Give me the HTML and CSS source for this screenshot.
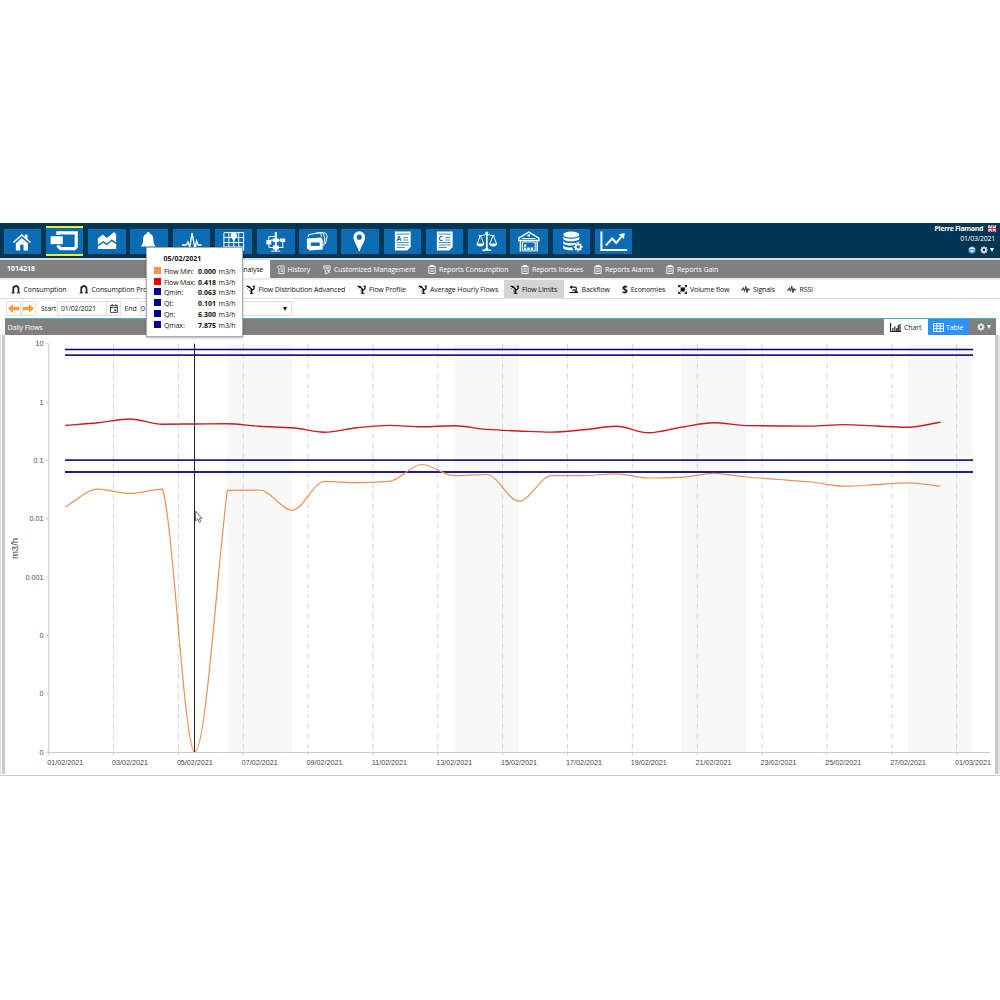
FILE: index.html
```
<!DOCTYPE html>
<html lang="en">
<head>
    <meta charset="UTF-8">
    <meta name="viewport" content="width=device-width, initial-scale=1.0">
    <title>Flow Limits</title>
    <link rel="stylesheet" href="styles.css">
</head>

<body>

    <!-- shared symbols -->
    <svg class="defs">
      <symbol id="ic-clip" viewBox="0 0 9 10"><path d="M1 1.5h7v8h-7z" fill="none" stroke="currentColor"/><path d="M3 0h3v2H3zM2.5 4h4M2.5 5.7h4M2.5 7.4h4" fill="currentColor" stroke="currentColor" stroke-width=".8"/></symbol>
      <symbol id="ic-hist" viewBox="0 0 9 10"><path d="M4.500 1H8v8.500H2V5" fill="none" stroke="currentColor" stroke-width=".9"/><circle cx="2.600" cy="2.600" r="1.900" fill="none" stroke="currentColor" stroke-width=".8"/><path d="M4 5.500h3M4 7.200h3M5.500 3.500h1.500" stroke="currentColor" stroke-width=".8"/></symbol>
      <symbol id="ic-cust" viewBox="0 0 9 10"><path d="M1 .8h7v4l-3 4.700H2.500V6L1 4z" fill="none" stroke="currentColor" stroke-width=".9"/><path d="M2 2.500h5M2.500 4.200h4M6 6l2 3M4 6.500l3-1" stroke="currentColor" stroke-width=".9"/></symbol>
      <symbol id="ic-pipe" viewBox="0 0 9 9"><path d="M2 8V4.200C2 2 3.300 1.200 4.800 1.200S7.300 2.200 7.300 4V8" fill="none" stroke="#222" stroke-width="1.700"/><path d="M.4 7.900h3.200M5.600 7.900h3M1.200 2.200h2M4.800 0v2" stroke="#222" stroke-width="1"/></symbol>
      <symbol id="ic-tap" viewBox="0 0 10 10"><path d="M.3 1.200l3 .8 2.700 2.800v4.700M6 6L8.600 4.200V.8" fill="none" stroke="#111" stroke-width="1.400"/><path d="M1.500 3.800l2.600-2.600M7 1.400h3M3.600 5.800l2.200-.6M3.800 7.600h2M4 9.300h4" stroke="#111" stroke-width="1"/></symbol>
      <symbol id="ic-back" viewBox="0 0 10 9"><path d="M2 2h4c2.500 0 2.500 3.200 0 3.200H3.500M.5 7.600h9" fill="none" stroke="#111" stroke-width="1.200"/><path d="M3 0v4L.5 2zM7.500 4.800l2 2.800H5.500z" fill="#111"/></symbol>
      <symbol id="ic-vol" viewBox="0 0 9 9"><circle cx="4.500" cy="4.500" r="2.300" fill="#111"/><path d="M.2 0h2.200L1 1zM0 0h2.500v1H1v1.500H0zM6.500 0H9v2.500H8V1H6.500zM9 6.500V9H6.500V8H8V6.500zM2.500 9H0V6.500h1V8h1.500z" fill="#111"/><path d="M.8.800l1.700 1.700M8.200.800L6.500 2.500M.8 8.200l1.700-1.700M8.200 8.200L6.500 6.500" stroke="#111"/></symbol>
      <symbol id="ic-sig" viewBox="0 0 10 8"><path d="M0 4.500h1.400L2.500 2l1.200 4L5 .6l1.300 6.600 1-4.400 .9 1.700H10" fill="none" stroke="#222" stroke-width="1"/></symbol>
      <symbol id="ic-gear" viewBox="0 0 10 10"><circle cx="5" cy="5" r="2.600" fill="none" stroke="#fff" stroke-width="1.700"/><path d="M5 .4v1.800M5 7.800v1.800M.4 5h1.800M7.800 5h1.800M1.800 1.800L3 3M7 7l1.200 1.200M8.200 1.800L7 3M1.800 8.200L3 7" stroke="#fff" stroke-width="1.500"/></symbol>
    </svg>

    <div class="window">
      <header class="topbar">
        <nav class="tiles">
          <a class="tile"><svg viewBox="0 0 38 25"><path d="M9 13L18 5l3.200 2.800V5.500h2.600V10l3.500 3-1 1.100L18 6.900 10 14.100zM12 14.200l6-5.300 6.200 5.300V21.500h-4.400v-5.600h-3.400v5.600H12z"/></svg></a>
          <a class="tile active"><svg viewBox="0 0 38 25"><path d="M4.700 8.200h12.300v8H4.700z"/><path d="M12 7V4.800H30.600V19L29 20.700H14.800L12.500 18.400V17.300" class="ln3"/></svg></a>
          <a class="tile"><svg viewBox="0 0 38 25"><path d="M10 9.500l5-4 4 3.500 7.500-6 2 2.500v7.800l-4.500-2.800-5 4-3.500-2.500L10 15.800z"/><path d="M10 17.600l5.500-3.800 3.500 2.500 5-4 4.500 2.800V20H10z"/></svg></a>
          <a class="tile"><svg viewBox="0 0 38 25"><path d="M18.500 3c1 0 1.600.7 1.600 1.600 3 .9 3.600 3.400 3.600 6.400 0 3.600 1 5 2.300 6.500H11c1.300-1.500 2.300-2.900 2.300-6.500 0-3 .6-5.500 3.600-6.400 0-.9.6-1.600 1.600-1.600zM16.500 18.500h4l-2 2z"/></svg></a>
          <a class="tile"><svg viewBox="0 0 38 25"><path d="M9 16h4.500l1.500-3 2 5 2.300-14 3 16 1.600-8 1.600 4H29" class="ln1h"/></svg></a>
          <a class="tile"><svg viewBox="0 0 38 25"><path d="M9 3.500h20v18H9zM14 3.500v18M19 10v12M24 3.500v18M9 8.500h20M9 13.500h20M9 18h20" class="ln1"/><circle cx="19" cy="6.500" r="3.200"/><path d="M16.500 8h5L19 13z"/></svg></a>
          <a class="tile"><svg viewBox="0 0 38 25"><path d="M19 3v19M14.500 22.300h9M12 13V7.500h7M12 15.500v3h15M26 12v6" class="ln1"/><path d="M18 3h2v19h-2zM9.500 11h5v4.500h-5zM16 9.500h6v3.500h-6zM23.500 9.500h5V13h-5zM16 16.500h6v4h-6zM14 10.500h12v1.200H14z"/></svg></a>
          <a class="tile"><svg viewBox="0 0 38 25"><path d="M8 9.500l14.500-1 1.500 2.300V20.500l-13 1-3-2z"/><path d="M9 8l1-2.500 12-2 .8 4M17 4l7.500-.5 1.500 6-1 7.500M22 3.500l5 .5 1.500 3-1.800 8" class="ln1"/><path d="M12 13.500h9V17h-9z" class="cut"/></svg></a>
          <a class="tile"><svg viewBox="0 0 38 25"><path d="M18.500 2.200a5.900 5.900 0 0 1 5.900 5.900c0 4.500-3.700 8-5.400 14.200h-1c-1.700-6.200-5.400-9.700-5.400-14.200a5.900 5.900 0 0 1 5.900-5.900zm0 3.300a2.600 2.600 0 1 0 0 5.200 2.600 2.600 0 0 0 0-5.200z" fill-rule="evenodd"/></svg></a>
          <a class="tile"><svg viewBox="0 0 38 25"><path d="M11 2.500h16v15.500l-3.500 3.500H11z"/><path d="M12.500 5h13M19.500 8.500h5M19.500 11h5M13 13.500h12M13 16h12M13 18.500h8" class="cutln"/><text x="12.600" y="11.800">A</text></svg></a>
          <a class="tile"><svg viewBox="0 0 38 25"><path d="M11 2.500h16v15.500l-3.500 3.500H11z"/><path d="M12.500 5h13M19.500 8.500h5M19.500 11h5M13 13.500h12M13 16h12M13 18.500h8" class="cutln"/><text x="12.600" y="11.800">C</text></svg></a>
          <a class="tile"><svg viewBox="0 0 38 25"><path d="M19 3v17M11 6.200c3 1.200 5-.8 8-.8s5 2 8 .8M12.500 6.200L9.300 15M12.500 6.200L16 15M25.500 6.200L22 15M25.500 6.200L29 15" class="ln1"/><path d="M8.500 14.500h8c0 4-8 4-8 0zM21.500 14.500h8c0 4-8 4-8 0zM18.200 5h1.600v15h-1.600zM17.500 19h3v1.500h3V22h-9v-1.500h3z"/><circle cx="19" cy="4" r="1.600"/></svg></a>
          <a class="tile"><svg viewBox="0 0 38 25"><path d="M8.800 9l10.200-6 10.200 6v2.500H8.800zM10.500 11v11.500M27.500 11v11.500" class="ln1h"/><path d="M12.500 9.500h13M12.500 13h13v9h-13z" class="ln1"/><path d="M14 15.500h2.500v2H14zM14 18.500h2.500V21H14zM17.500 18.500h2.500V21h-2.500zM21 18.500h2.500V21h-2.500zM17.700 5.500h2.600v2h-2.600z"/></svg></a>
          <a class="tile"><svg viewBox="0 0 38 25"><ellipse cx="18.500" cy="5.500" rx="8.200" ry="3"/><path d="M10.300 7.500c2 3 14.400 3 16.400 0V10c-2 3.200-14.400 3.200-16.400 0zM10.300 12c2 3 14.400 3 16.400 0v1.500c-3 .5-5 1.500-6 2.900-4 .3-9.400-.4-10.400-2zM10.300 16.500c2 1.800 6 2.300 9.300 2 0 1 .3 1.900.8 2.800-4 .3-9.100-.3-10.100-2z"/><circle cx="25.500" cy="18" r="2.500" class="ln15"/><path d="M25.500 13.500v2M25.500 20.500v2M21 18h2M28 18h2M22.300 14.800l1.400 1.400M27.300 19.800l1.400 1.400M28.700 14.800l-1.400 1.400M23.700 19.800l-1.400 1.400" class="ln1h"/></svg></a>
          <a class="tile"><svg viewBox="0 0 38 25"><path d="M6.500 2.500V21.200H32.500" class="ln2"/><path d="M11 16.500l6.500-7 4 4.500 6.500-8" class="ln2"/><path d="M24 5.300l6-1.300-.6 6z"/></svg></a>
        </nav>
        <div class="user">
          <div class="line name">Pierre Flamand <svg class="flag" viewBox="0 0 9 7"><path fill="#234a8c" d="M0 0h9v7H0z"/><path d="M0 0l9 7M9 0L0 7" stroke="#fff" stroke-width="1.600"/><path d="M0 0l9 7M9 0L0 7" stroke="#d8304a" stroke-width=".7"/><path d="M4.500 0v7M0 3.500h9" stroke="#fff" stroke-width="2.400"/><path d="M4.500 0v7M0 3.500h9" stroke="#d8304a" stroke-width="1.300"/></svg></div>
          <div class="line today">01/03/2021</div>
          <div class="line tools"><svg class="globe" viewBox="0 0 8 8"><circle cx="4" cy="4" r="3.600" fill="#5aa0dc"/><path d="M1.300 2.800c1.500-2 4-2 5.400 0L6 5 4 6.500 2 5z" fill="#e6f1fa"/><path d="M2 3.800h4" stroke="#2f72b5"/></svg><svg class="gear"><use href="#ic-gear"/></svg><i class="caret"></i></div>
        </div>
      </header>

      <div class="menubar">
        <div class="meter">1014218</div>
        <div class="tab selected">Analyse</div>
        <div class="tab m1"><svg><use href="#ic-hist"/></svg>History</div>
        <div class="tab m2"><svg><use href="#ic-cust"/></svg>Customized Management</div>
        <div class="tab m3"><svg><use href="#ic-clip"/></svg>Reports Consumption</div>
        <div class="tab m4"><svg><use href="#ic-clip"/></svg>Reports Indexes</div>
        <div class="tab m5"><svg><use href="#ic-clip"/></svg>Reports Alarms</div>
        <div class="tab m6"><svg><use href="#ic-clip"/></svg>Reports Gain</div>
      </div>

      <div class="submenu">
        <div class="item s1"><svg><use href="#ic-pipe"/></svg>Consumption</div>
        <div class="item s2"><svg><use href="#ic-pipe"/></svg>Consumption Pro</div>
        <div class="item s3"><svg><use href="#ic-tap"/></svg>Flow Distribution Advanced</div>
        <div class="item s4"><svg><use href="#ic-tap"/></svg>Flow Profile</div>
        <div class="item s5"><svg><use href="#ic-tap"/></svg>Average Hourly Flows</div>
        <div class="item s6 current"><svg><use href="#ic-tap"/></svg>Flow Limits</div>
        <div class="item s7"><svg><use href="#ic-back"/></svg>Backflow</div>
        <div class="item s8"><b class="dollar">$</b>Economies</div>
        <div class="item s9"><svg><use href="#ic-vol"/></svg>Volume flow</div>
        <div class="item s10"><svg><use href="#ic-sig"/></svg>Signals</div>
        <div class="item s11"><svg><use href="#ic-sig"/></svg>RSSI</div>
      </div>

      <div class="filter">
        <span class="arrow"><svg viewBox="0 0 14 12"><path d="M1 6l5.500-5v3H13v4H6.500v3z"/></svg></span>
        <span class="arrow"><svg viewBox="0 0 14 12"><path d="M13 6L7.500 1v3H1v4h6.500v3z"/></svg></span>
        <label>Start</label>
        <span class="field date">01/02/2021</span>
        <span class="field cal"><svg viewBox="0 0 9 10"><path d="M.6 1.800h7.800v7.600H.6zM.6 4h7.800M2.500 0v2.500M6.500 0v2.500" fill="none" stroke="#333"/><path d="M5 6h2v2H5z" fill="#333"/></svg></span>
        <label class="end">End</label>
        <span class="field date2">0</span>
        <span class="field select"><i class="caret"></i></span>
      </div>

      <div class="panel-title">
        <span class="title">Daily Flows</span>
        <div class="view chart-btn"><svg viewBox="0 0 11 9"><path d="M.5 0v8.500H11M2.800 8V5M4.800 8V3.500M6.800 8V5M8.300 8V2M10 8V1" fill="none" stroke="#222" stroke-width="1.200"/></svg>Chart</div>
        <div class="view table-btn"><svg viewBox="0 0 11 9"><path d="M.5.500h10v8H.500zM.5 3h10M.5 5.700h10M3.800.500v8M7.200.500v8" fill="none" stroke="#fff" stroke-width=".9"/></svg>Table</div>
        <div class="view opts"><svg class="gear"><use href="#ic-gear"/></svg><i class="caret"></i></div>
      </div>

      <div class="chart">
        <svg id="plot" viewBox="0 335 1000 439" width="1000" height="439"></svg>
      </div>

      <div class="tooltip">
        <div class="tt-title">05/02/2021</div>
        <div class="tt-row"><i class="sw orange"></i><span>Flow Min:</span><b>0.000</b> m3/h</div>
        <div class="tt-row"><i class="sw red"></i><span>Flow Max:</span><b>0.418</b> m3/h</div>
        <div class="tt-row"><i class="sw"></i><span>Qmin:</span><b>0.063</b> m3/h</div>
        <div class="tt-row"><i class="sw"></i><span>Qt:</span><b>0.101</b> m3/h</div>
        <div class="tt-row"><i class="sw"></i><span>Qn:</span><b>6.300</b> m3/h</div>
        <div class="tt-row"><i class="sw"></i><span>Qmax:</span><b>7.875</b> m3/h</div>
      </div>
    </div>

    <script>

        var X0 = 65.2, DAY = 32.42, TOP = 343.7, BOTTOM = 752.5;

        // one value per day, already as heights on the plot
        var flowMin = [507, 489.2, 493.4, 489.2, 752, 490.3, 490, 510.3, 481.4, 482.7, 481.3, 464.5, 475.7, 474.5,
                       501.2, 475.6, 475.6, 473.9, 478, 477.3, 473.3, 477, 479.5, 482, 486.2, 484.7, 482.8, 486.2];
        var flowMax = [425.5, 422.8, 419, 424.2, 424, 423.7, 426.3, 427.8, 432.2, 427.8, 425.4, 426.8, 425.7, 429.4,
                       431, 432.1, 429.8, 426.3, 432.8, 427.3, 422.7, 425.6, 426, 426.1, 424.6, 426, 427.2, 422.3];

        var out = "";

        function line(x1, y1, x2, y2, cls) {
            out += '<line x1="' + x1 + '" y1="' + y1 + '" x2="' + x2 + '" y2="' + y2 + '" class="' + cls + '"/>';
        }

        function label(x, y, txt, cls) {
            out += '<text x="' + x + '" y="' + y + '" class="' + cls + '">' + txt + '</text>';
        }

        // monotone spline
        function curve(v, cls) {
            var d = [], m = [], i;
            for (i = 0; i < v.length - 1; i++) d[i] = v[i + 1] - v[i];
            m[0] = d[0];
            m[v.length - 1] = d[v.length - 2];
            for (i = 1; i < v.length - 1; i++) {
                m[i] = d[i - 1] * d[i] <= 0 ? 0 : 2 * d[i - 1] * d[i] / (d[i - 1] + d[i]);
            }
            var p = "M" + X0 + " " + v[0];
            for (i = 0; i < v.length - 1; i++) {
                var x = X0 + i * DAY, a = m[i], b = m[i + 1];
                // sharp corners on both sides of a drop to zero
                if (d[i] > 100) a = d[i] * 0.35;
                if (d[i] < -100) b = d[i];
                p += "C" + (x + DAY / 3) + " " + (v[i] + a / 3) + " " + (x + DAY * 2 / 3) + " " + (v[i + 1] - b / 3) + " " + (x + DAY) + " " + v[i + 1];
            }
            out += '<path d="' + p + '" class="' + cls + '"/>';
        }

        // weekends
        [5, 12, 19, 26].forEach(function (n) {
            out += '<rect x="' + (X0 + n * DAY) + '" y="' + TOP + '" width="' + 2 * DAY + '" height="408" class="weekend"/>';
        });

        for (var i = 0; i < 14; i++) {
            line(113.5 + i * 64.86, TOP, 113.5 + i * 64.86, BOTTOM, "grid");
            line(113.5 + i * 64.86, BOTTOM, 113.5 + i * 64.86, 755, "axis");
        }

        line(48.800, TOP, 48.800, 755, "axis");
        line(48.5, BOTTOM, 990, BOTTOM, "axis");

        ["10", "1", "0.1", "0.01", "0.001", "0", "0", "0"].forEach(function (t, n) {
            var y = TOP + n * 58.36;
            line(46, y, 48.5, y, "axis");
            label(43.5, y + 2.5, t, "ylab");
        });

        for (i = 0; i < 15; i++) {
            var day = 1 + i * 2;
            var txt = day > 28 ? "01/03/2021" : (day < 10 ? "0" + day : day) + "/02/2021";
            label(65.2 + i * 64.84, 764.6, txt, "xlab");
        }
        out += '<text transform="translate(17.5 548.5) rotate(-90)" class="unit">m3/h</text>';

        line(65, 349.5, 973, 349.5, "limit thin");
        line(65, 355.2, 973, 355.2, "limit");
        line(65, 460.2, 973, 460.2, "limit");
        line(65, 472, 973, 472, "limit");
        curve(flowMin, "fmin");
        curve(flowMax, "fmax");
        line(194.5, TOP, 194.5, 752, "cursor-line");

        out += '<path d="M195.500 511v10l2.300-2 1.500 3.300 1.500-.7-1.500-3.200h2.700z" class="pointer"/>';

        document.getElementById("plot").innerHTML = out;

    </script>

</body>
</html>
```
FILE: styles.css
```
* {
    box-sizing: border-box;
}

body {
    margin: 0;
    padding-top: 223px;
    background-color: #fff;
    font-family: "Open Sans", "Noto Sans", sans-serif;
    font-size: 7px;
    letter-spacing: -.1px;
    color: #222;
    white-space: nowrap;
}

.defs {
    display: none;
}

.window {
    position: relative;
    width: 1000px;
    height: 553px;
    border-bottom: 1px solid #ccc;
}

/* top bar */
.topbar {
    display: flex;
    justify-content: space-between;
    height: 35px;
    padding-left: 3.6px;
    background-color: #003553;
}

.tiles {
    display: flex;
    gap: 4.7px;
    padding-top: 6px;
}

.tile {
    width: 37.55px;
    height: 25px;
    background-color: #0b6bb3;
}

.tile.active {
    height: 29.500px;
    margin-top: -3px;
    border-top: 2.500px solid #f8ee1c;
    border-bottom: 2.500px solid #f8ee1c;
}

.tile svg {
    display: block;
    width: 100%;
    height: 25px;
    fill: #fff;
}

.tile text {
    font-size: 7px;
    font-weight: bold;
    fill: #0b6bb3;
}

.ln1, .ln1h, .ln15, .ln2, .ln3 {
    fill: none;
    stroke: #fff;
}
.ln1 { stroke-width: 1; }
.ln1h { stroke-width: 1.4; }
.ln15 { stroke-width: 1.7; }
.ln2 { stroke-width: 2; }
.ln3 { stroke-width: 3.2; }

.tile .cut { fill: #0b6bb3; }

.cutln {
    stroke: #0b6bb3;
    stroke-width: .8;
}

.user {
    color: #fff;
    padding-right: 4px;
}

.user .line {
    display: flex;
    justify-content: flex-end;
    align-items: center;
    height: 11.6px;
}

.user .name {
    height: 10px;
    font-weight: bold;
    letter-spacing: -.35px;
}

.user .today {
    padding-right: 1px;
    letter-spacing: -.25px;
}

.user .tools {
    padding-right: 2px;
}

.flag {
    width: 8.5px;
    height: 7px;
    margin-left: 4.5px;
}

.globe {
    width: 8px;
    height: 8px;
    margin-right: 4px;
}

.gear {
    width: 8px;
    height: 8px;
    margin-right: 2px;
}

.caret {
    border: 2.5px solid transparent;
    border-top: 4px solid #fff;
    border-bottom: 0;
}

/* grey menu */
.menubar {
    display: flex;
    height: 22px;
    border-top: 2px solid #dcdde6;
    border-bottom: 2.5px solid #ececec;
    background-color: #808080;
    color: #fff;
}

.menubar > div {
    display: flex;
    align-items: center;
}

.menubar .meter {
    width: 230px;
    padding: 0 0 2px 7px;
    font-weight: bold;
    letter-spacing: 0;
}

.tab svg {
    width: 8px;
    height: 9px;
    margin-right: 3px;
}

.tab.selected {
    width: 39.5px;
    padding-left: 9px;
    margin-right: 7px;
    background-color: #fff;
    color: #111;
}

.m1 { width: 46.5px; }
.m2 { width: 105px; }
.m3 { width: 93px; }
.m4 { width: 73px; }
.m5 { width: 72px; }

/* second menu */
.submenu {
    display: flex;
    height: 19px;
    padding-left: 11px;
    border-bottom: 1px solid #ddd;
    color: #111;
}

.item {
    display: flex;
    align-items: center;
}

.item svg {
    width: 9.5px;
    height: 9px;
    margin-right: 3px;
    flex: none;
}

.dollar {
    font-size: 10px;
    margin-right: 3px;
}

.s1 { width: 68px; }
.s2 { width: 167px; }
.s3 { width: 110.5px; }
.s4 { width: 61px; }
.s5 { width: 86px; }
.s6 { width: 60px; padding-left: 6px; margin-right: 5.5px; }
.s7 { width: 53px; }
.s8 { width: 55.5px; }
.s9 { width: 63px; }
.s10 { width: 46.5px; }

.item.current {
    background-color: #d5d3d4;
}

/* date filter */
.filter {
    display: flex;
    align-items: center;
    height: 19px;
    padding-left: 6px;
}

.arrow {
    display: flex;
    align-items: center;
    justify-content: center;
    width: 14.5px;
    height: 15px;
    margin-right: 1px;
    border: 1px solid #e2e2e2;
}

.arrow svg {
    width: 13px;
    height: 11px;
    flex: none;
    fill: #f5a03a;
}

.filter label {
    width: 16px;
    margin-left: 4px;
}

.filter .end {
    margin-left: 3.5px;
}

.field {
    display: flex;
    align-items: center;
    height: 15px;
    border: 1px solid #ddd;
}

.date { width: 50px; padding-left: 3px; letter-spacing: -.25px; }
.cal { width: 14px; border-left: 0; justify-content: center; }
.cal svg { width: 8px; height: 9px; }
.date2 { width: 50px; padding-left: .5px; margin-left: -1px; }
.select { width: 102.500px; justify-content: flex-end; padding-right: 4px; }
.select .caret { border-top-color: #111; }

/* panel */
.panel-title {
    display: flex;
    height: 17px;
    margin: 0 4px 0 5px;
    border-top: 1px solid #43b4c6;
    background-color: #808080;
    color: #fff;
}

.title {
    flex: 1;
    padding-left: 2.5px;
    line-height: 17px;
}

.view {
    display: flex;
    align-items: center;
}

.view svg {
    width: 11px;
    height: 9px;
    margin-right: 3px;
}

.chart-btn {
    width: 44px;
    padding-left: 6px;
    background-color: #fff;
    color: #222;
}

.table-btn {
    width: 41px;
    padding-left: 5px;
    background-color: #2b91f5;
}

.table-btn svg {
    margin-right: 2px;
}

.opts {
    width: 27px;
    justify-content: flex-end;
    padding-right: 5px;
}

.view .gear {
    width: 8px;
    height: 8px;
    margin-right: 2px;
}

.chart {
    height: 439px;
    border-left: 1px solid #ddd;
    background: linear-gradient(to right, #fff 1px, #c8c8c8 1px, #c8c8c8 4px, #fff 4px, #fff 994px, #c8c8c8 994px, #c8c8c8 997px, #e6e6e6 997px);
}

#plot {
    display: block;
    margin-left: -1px;
}

#plot text {
    font-family: "Liberation Sans", Arial, sans-serif;
    font-size: 7.2px;
    letter-spacing: 0;
    fill: #444;
}

#plot .ylab { text-anchor: end; }
#plot .xlab { text-anchor: middle; }
#plot .unit { text-anchor: middle; font-size: 9.5px; }

.weekend { fill: #f8f8f8; }
.axis { stroke: #ccc; }
.grid { stroke: #d4d4d4; stroke-dasharray: 5 2 1 2; }

.limit {
    stroke: #1c1c96;
    stroke-width: 1.8;
}

.limit.thin {
    stroke: #000070;
    stroke-width: 1.4;
}

.fmin, .fmax {
    fill: none;
    stroke: #ed8f55;
    stroke-width: 1.2;
}

.fmax {
    stroke: #d01820;
    stroke-width: 1.4;
}

.cursor-line { stroke: #222; }
.pointer { fill: #fff; stroke: #333; stroke-width: .7; }

/* tooltip over the chart */
.tooltip {
    position: absolute;
    left: 146px;
    top: 24px;
    width: 96.5px;
    height: 90px;
    padding: 6px 0 0 7px;
    border: 1px solid #aaa;
    background-color: #fff;
    box-shadow: 0 1px 2px rgba(0, 0, 0, .3);
    color: #111;
}

.tt-title {
    padding-left: 9.5px;
    height: 12px;
    line-height: 10px;
    font-weight: bold;
    letter-spacing: 0;
}

.tt-row {
    display: flex;
    align-items: center;
    height: 10.8px;
}

.tt-row span {
    width: 34px;
    letter-spacing: -.15px;
}

.tt-row b {
    width: 20.5px;
    letter-spacing: 0;
}

.sw {
    width: 7px;
    height: 7px;
    margin: -2px 3px 0 0;
    background-color: #00008b;
}

.sw.orange { background-color: #ff9052; }
.sw.red { background-color: #f50000; }
```
